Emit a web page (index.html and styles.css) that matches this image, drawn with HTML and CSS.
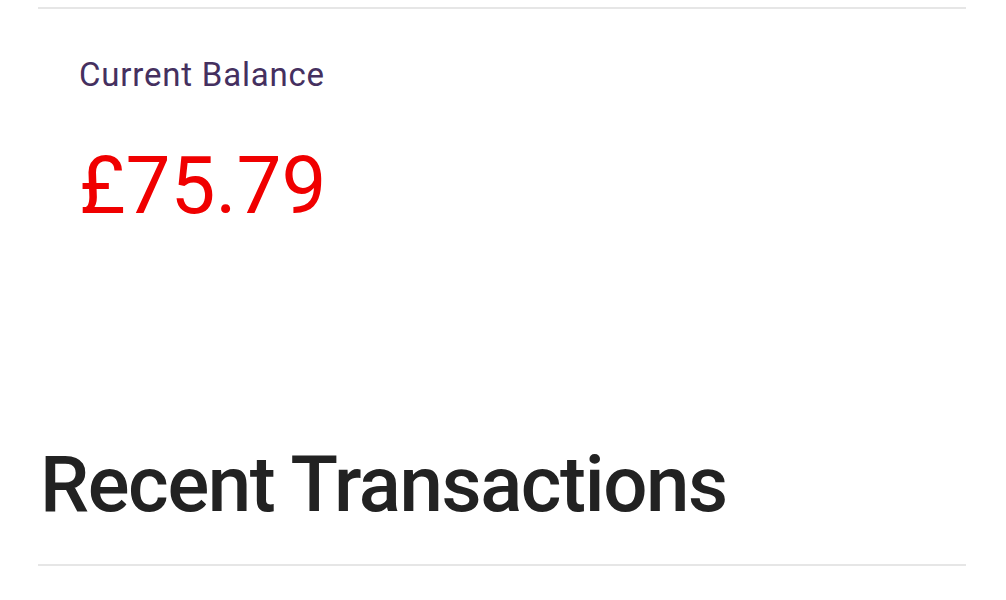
FILE: index.html
```html
<!DOCTYPE html>
<html lang="en">
<head>
    <meta charset="UTF-8">
    <meta name="viewport" content="width=device-width, initial-scale=1.0">
    <title>Balance</title>
    <link rel="stylesheet" href="styles.css">
</head>
<body>

<div class="page">
    <div class="divider"></div>

    <div class="balance-card">
        <div class="balance-label">Current Balance</div>
        <div class="balance-amount">£75.79</div>
    </div>

    <h1 class="section-title">Recent Transactions</h1>
    <div class="divider"></div>
</div>

</body>
</html>
```

FILE: styles.css
```css
body {
    font-family: Roboto, "Noto Sans", sans-serif;
    margin: 0;
    padding: 0;
    background-color: #ffffff;
}
.page {
    padding: 7px 40px 0 38px;
}
.divider {
    border-top: 2px solid #e6e6e6;
}
.balance-card {
    padding: 46px 0 0 41px;
    height: 430px;
    box-sizing: border-box;
}
.balance-label {
    font-size: 33px;
    letter-spacing: 0.8px;
    color: #45305f;
}
.balance-amount {
    margin-top: 46px;
    font-size: 80px;
    color: #f00000;
    line-height: 1.172;
}
.section-title {
    margin: 0 0 34px 2px;
    font-size: 78px;
    font-weight: 500;
    letter-spacing: -1.4px;
    line-height: 1.172;
    color: #222222;
}
```
